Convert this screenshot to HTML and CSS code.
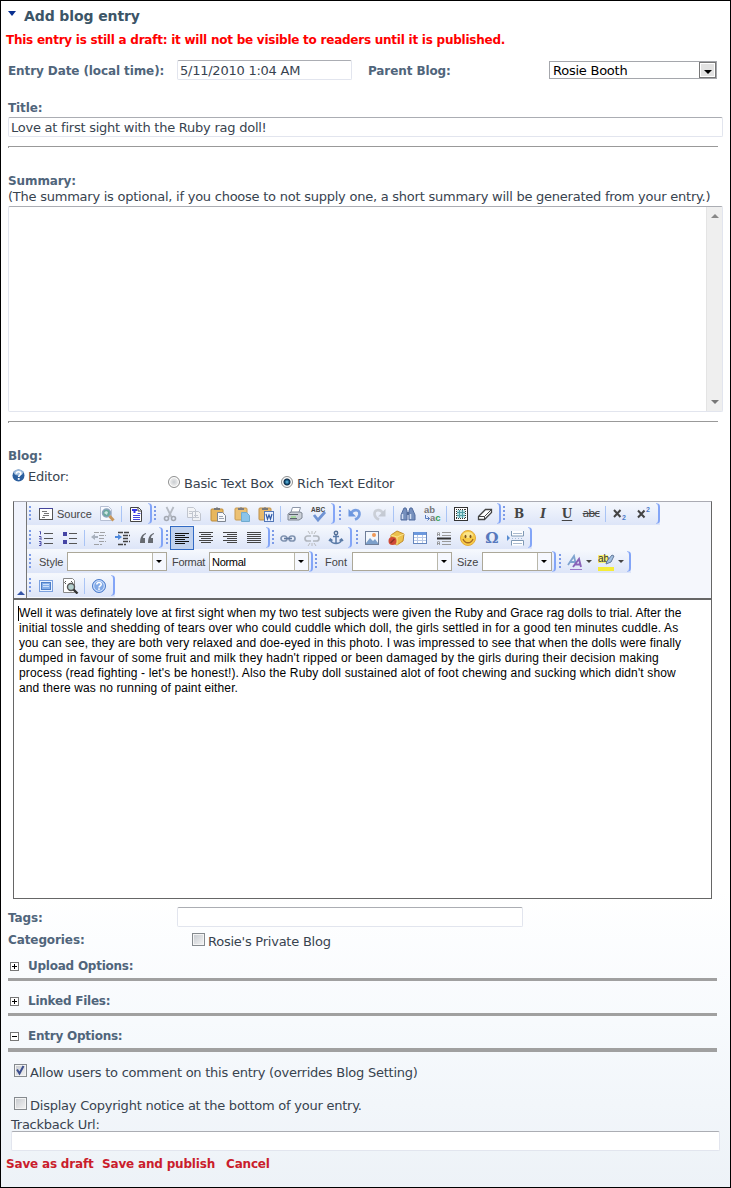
FILE: index.html
```html
<!DOCTYPE html>
<html lang="en">
<head>
<meta charset="utf-8">
<title>Add blog entry</title>
<link rel="stylesheet" href="styles.css">
</head>
<body>
<main class="page">
  <h1 class="heading"><span class="caret"></span><span class="heading-text">Add blog entry</span></h1>
  <p class="warning">This entry is still a draft: it will not be visible to readers until it is published.</p>
  <div class="row date-row">
    <span class="label date-label">Entry Date (local time):</span>
    <div class="field date-field">5/11/2010 1:04 AM</div>
    <span class="label parent-label">Parent Blog:</span>
    <div class="select"><span>Rosie Booth</span><i class="select-btn"></i></div>
  </div>
  <div class="label title-label">Title:</div>
  <div class="field title-field">Love at first sight with the Ruby rag doll!</div>
  <div class="rule"></div>
  <div class="label block-label">Summary:</div>
  <div class="note"><span>(The summary is optional, if you choose to not supply one, a short summary will be generated from your entry.)</span></div>
  <div class="textarea"><div class="scroll"><i class="up"></i><i class="down"></i></div></div>
  <div class="rule"></div>
  <div class="label block-label">Blog:</div>
  <div class="editor-row">
    <svg class="help" width="13" height="13" viewBox="0 0 13 13"><circle cx="6.5" cy="6.5" r="6" fill="#2c5f9e"/><ellipse cx="6.5" cy="3.6" rx="4.6" ry="3" fill="#9dbbdc"/><path d="M4.3 4.7C4.4 2 9 2.2 8.8 4.7 8.7 6.2 6.8 6.2 6.7 8" fill="none" stroke="#fff" stroke-width="1.7"/><rect x="5.8" y="9" width="1.8" height="1.8" fill="#fff"/></svg>
    <span class="editor-label">Editor:</span>
    <i class="radio"></i><span class="radio-text basic">Basic Text Box</span>
    <i class="radio on"></i><span class="radio-text rich">Rich Text Editor</span>
  </div>

  <div class="editor">
    <div class="toolbox">
      <div class="collapse"><i></i></div>
      <div class="bars">
        <div class="bar">
          <div class="group">
            <span class="btn source"><svg width="16" height="16" viewBox="0 0 16 16"><rect x="1.5" y="2.5" width="13" height="11" fill="#fff" stroke="#555"/><path d="M1 2.5h14" stroke="#44449c"/><path d="M4 5.5h5M6 7.500h5M5 9.500h6M4 11.500h3" stroke="#777"/></svg><span>Source</span></span>
            <span class="btn"><svg width="18" height="16" viewBox="0 0 18 16"><path d="M2.500.5h8l3 3v11h-11z" fill="#f8faff" stroke="#b6bfd3"/><circle cx="8.500" cy="7" r="4" fill="#69a99b" stroke="#8ca4bd" stroke-width="1.500"/><path d="M6 7l2-2 2 1-1 3z" fill="#cfe6e4"/><path d="M11.500 10l4 4.500" stroke="#c9975c" stroke-width="3"/></svg></span>
            <i class="sep"></i>
            <span class="btn"><svg width="16" height="16" viewBox="0 0 16 16"><path d="M2.500 1.500h8l3 3v11h-11z" fill="#fff" stroke="#444"/><path d="M10 1v4h4" fill="none" stroke="#444"/><path d="M4 4h5M6.500 4v3" stroke="#3434e8" stroke-width="2"/><path d="M9.500 7.500h3M5 9.500h7M5 11.500h7M5 13.500h7" stroke="#4646e0"/></svg></span>
          </div>
          <div class="group">
            <span class="btn"><svg class="dim" width="16" height="16" viewBox="0 0 16 16"><path d="M4.500 1l5 10M11.500 1l-5 10" stroke="#a3a8b0" stroke-width="1.800"/><circle cx="4.500" cy="12.500" r="2" fill="none" stroke="#8d929a" stroke-width="1.600"/><circle cx="11.500" cy="12.500" r="2" fill="none" stroke="#8d929a" stroke-width="1.600"/></svg></span>
            <span class="btn"><svg class="dim" width="16" height="16" viewBox="0 0 16 16"><path d="M1.500 1.500h6l2 2v8h-8zM6.500 5.500h6l2 2v7h-8z" fill="#f6f6f6" stroke="#b4b8c0"/><path d="M3 5.500h3M3 7.500h3M8 9.500h4M8 11.500h5" stroke="#b8bbc2"/></svg></span>
            <span class="btn"><svg width="16" height="16" viewBox="0 0 16 16"><rect x="1" y="3" width="12" height="12" rx="1" fill="#e7b65c" stroke="#bc8b3b"/><path d="M4 4V2h2l1-1 1 1h2v2z" fill="#777"/><path d="M7.500 6.500h5l3 3v6h-8z" fill="#f7f9fc" stroke="#7e8590"/><path d="M9 10.500h4M9 12.500h5" stroke="#9ca3b3"/></svg></span>
            <span class="btn"><svg width="16" height="16" viewBox="0 0 16 16"><rect x="1" y="2" width="12" height="12" rx="1" fill="#ecc173" stroke="#c79a51"/><path d="M4 4V2h2l1-1 1 1h2v2z" fill="#7c7c80"/><path d="M7.500 6.500h5l3 3v6h-8z" fill="#8bc4e9" stroke="#70abcf"/></svg></span>
            <span class="btn"><svg width="16" height="16" viewBox="0 0 16 16"><rect x="1" y="2" width="12" height="12" rx="1" fill="#e7b96b" stroke="#bd8f48"/><path d="M4 4V2h2l1-1 1 1h2v2z" fill="#777"/><rect x="6.500" y="5.500" width="9" height="10" fill="#eaf2ff" stroke="#5477b7"/><path d="M8 8l1.500 5 1.500-4 1.500 4 1.500-5" fill="none" stroke="#315aa6" stroke-width="1.200"/></svg></span>
            <i class="sep"></i>
            <span class="btn"><svg width="16" height="16" viewBox="0 0 16 16"><path d="M5.500 1.500h8l-2 6h-8z" fill="#fff" stroke="#8c96a8"/><path d="M1 8l3-2h9l2 1v5l-3 2H1z" fill="#cbd0d8" stroke="#7e8692"/><path d="M2 8.500h9M3 12.500h7" stroke="#5b636e"/><path d="M4 11h5" stroke="#7fdb67"/></svg></span>
            <span class="btn"><svg width="18" height="16" viewBox="0 0 18 16"><text class="abc" x="1" y="6">ABC</text><path d="M4 9l4 5 7-8" fill="none" stroke="#6f93d3" stroke-width="2.800"/></svg></span>
          </div>
          <div class="group shift2">
            <span class="btn"><svg width="16" height="16" viewBox="0 0 16 16"><path d="M4 7C7 3 13 3 12.500 8.500c-.3 2-2 4-4.500 5" fill="none" stroke="#779ee1" stroke-width="2.600"/><path d="M1.500 3v7.500H9z" fill="#6b96df"/></svg></span>
            <span class="btn"><svg class="dim" width="16" height="16" viewBox="0 0 16 16"><path d="M12 7C9 3 3 3 3.500 8.500c.3 2 2 4 4.500 5" fill="none" stroke="#c1c5cc" stroke-width="2.600"/><path d="M14.500 3v7.500H7z" fill="#b9bec6"/></svg></span>
            <i class="sep"></i>
            <span class="btn"><svg width="16" height="16" viewBox="0 0 16 16"><path d="M4 2h2l1 3 0 9H1V9zM12 2h-2L9 5v9h6V9z" fill="#7690bd" stroke="#526c9f"/><path d="M7 6h2v3H7z" fill="#536b97"/><path d="M2.500 8v5M10.500 8v5" stroke="#d2def2" stroke-width="1.500"/></svg></span>
            <span class="btn"><svg width="18" height="18" viewBox="0 0 18 18"><text class="repl" x="1" y="8">ab</text><text class="repl" x="7" y="16">a<tspan fill="#38a157">c</tspan></text><path d="M2.500 10v3.500h4M4.500 11.500l2 2-2 2" fill="none" stroke="#5579bd"/></svg></span>
            <i class="sep"></i>
            <span class="btn"><svg width="16" height="16" viewBox="0 0 16 16"><rect x="1.500" y="1.500" width="13" height="13" fill="#fff" stroke="#333"/><rect x="4" y="4" width="8" height="8" fill="#b9e2e5"/><path d="M4 6.500h8M4 9.500h8M6.500 4v8M9.500 4v8" stroke="#519da4"/><path d="M3 3.500h10M3 12.500h10M3.500 3v10M12.500 3v10" stroke="#333" stroke-dasharray="1 1"/></svg></span>
            <span class="btn"><svg width="16" height="16" viewBox="0 0 16 16"><path d="M1.500 10.500l7-7h6v3l-7 7h-6z" fill="#fff" stroke="#444" stroke-width="1.300"/><path d="M1.500 10.500h6l7-7M7.500 10.500v3" fill="none" stroke="#444"/></svg></span>
          </div>
          <div class="group">
            <span class="btn fmt b">B</span><span class="btn fmt i">I</span><span class="btn fmt u">U</span><span class="btn fmt s">abc</span>
            <i class="sep"></i>
            <span class="btn"><svg width="16" height="16" viewBox="0 0 16 16"><path d="M2 4l6.500 7M8.500 4L2 11" stroke="#444" stroke-width="2"/><text class="script" x="10" y="14">2</text></svg></span>
            <span class="btn"><svg width="16" height="16" viewBox="0 0 16 16"><path d="M2 4.500l6.500 7M8.500 4.500L2 11.500" stroke="#444" stroke-width="2"/><text class="script" x="10" y="6">2</text></svg></span>
          </div>
        </div>

        <div class="bar">
          <div class="group">
            <span class="btn"><svg width="16" height="16" viewBox="0 0 16 16"><path d="M6 3.500h9M6 8.500h9M6 13.500h9" stroke="#555"/><path d="M1.500 1.500h1v3M1 6.500h2v1l-1.500 1.500H4M1 11.500h2v4H1M1.500 13.500H3" fill="none" stroke="#4b4ba8"/></svg></span>
            <span class="btn"><svg width="16" height="16" viewBox="0 0 16 16"><path d="M1 2h4v4H1zM1 10h4v4H1z" fill="#4545a5"/><path d="M7 3.500h8M7 8.500h8M7 13.500h8" stroke="#555"/></svg></span>
            <i class="sep"></i>
            <span class="btn"><svg class="dim" width="16" height="16" viewBox="0 0 16 16"><path d="M3 2.500h12M8 5.500h7M8 8.500h5M8 11.500h7M3 14.500h8" stroke="#888" stroke-dasharray="5 1"/><path d="M0 7l4-3v2h3v2H4v2z" fill="#929ca9"/></svg></span>
            <span class="btn"><svg width="16" height="16" viewBox="0 0 16 16"><path d="M3 2.500h12M8 5.500h7M8 8.500h5M8 11.500h7M3 14.500h8" stroke="#444" stroke-width="1.500" stroke-dasharray="5 1"/><path d="M7 7L3 4v2H0v2h3v2z" fill="#4f89dc"/></svg></span>
            <span class="btn"><svg width="16" height="16" viewBox="0 0 16 16"><path d="M7 3C3 4 1 7 1 13h5V8H4c0-2 1-3 3-4zM15 3c-4 1-6 4-6 10h5V8h-2c0-2 1-3 3-4z" fill="#666a70"/></svg></span>
          </div>
          <div class="group shift1">
            <span class="btn active"><svg width="16" height="16" viewBox="0 0 16 16"><path d="M1 3.500h14M1 5.500h10M1 7.500h14M1 9.500h10M1 11.500h14M1 13.500h10" stroke="#111"/></svg></span>
            <span class="btn"><svg width="16" height="16" viewBox="0 0 16 16"><path d="M1 2.500h14M3 4.500h10M1 6.500h14M3 8.500h10M1 10.500h14M3 12.500h10" stroke="#444"/></svg></span>
            <span class="btn"><svg width="16" height="16" viewBox="0 0 16 16"><path d="M1 2.500h14M5 4.500h10M1 6.500h14M5 8.500h10M1 10.500h14M5 12.500h10" stroke="#444"/></svg></span>
            <span class="btn"><svg width="16" height="16" viewBox="0 0 16 16"><path d="M1 2.500h14M1 4.500h14M1 6.500h14M1 8.500h14M1 10.500h14M1 12.500h14" stroke="#444"/></svg></span>
          </div>
          <div class="group">
            <span class="btn"><svg width="16" height="16" viewBox="0 0 16 16"><rect x="1" y="6" width="6" height="5" rx="2.500" fill="none" stroke="#8194b1" stroke-width="1.700"/><rect x="9" y="6" width="6" height="5" rx="2.500" fill="none" stroke="#8194b1" stroke-width="1.700"/><path d="M4 8.500h8" stroke="#62799d" stroke-width="1.500"/></svg></span>
            <span class="btn"><svg class="dim" width="16" height="16" viewBox="0 0 16 16"><path d="M7 6H3.500a2.500 2.500 0 000 5H7M9 6h3.500a2.500 2.500 0 010 5H9" fill="none" stroke="#a0a5ac" stroke-width="1.700"/><path d="M8 1v3M8 13v3M4 1l2 3M12 1l-2 3M4 16l2-3M12 16l-2-3" stroke="#aaa"/></svg></span>
            <span class="btn"><svg width="16" height="16" viewBox="0 0 16 16"><circle cx="8" cy="3" r="1.700" fill="none" stroke="#536f96" stroke-width="1.400"/><path d="M8 5v9M5 6.500h6M2.500 9v1.500c1 2 3 3 5.500 3s4.500-1 5.500-3V9M1 11l1.500-2 2 1.500M15 11l-1.500-2-2 1.500" fill="none" stroke="#597aa7" stroke-width="1.500"/></svg></span>
          </div>
          <div class="group shift2">
            <span class="btn"><svg width="16" height="16" viewBox="0 0 16 16"><rect x="1.500" y="1.500" width="13" height="13" fill="#f3f7fc" stroke="#6f7e98"/><path d="M2 13l4-5 3 3 2-2 3 4v1H2z" fill="#7c9fca"/><circle cx="10" cy="5" r="2" fill="#f09958"/></svg></span>
            <span class="btn"><svg width="17" height="16" viewBox="0 0 17 16"><path d="M3 5l6-4 7 3-1 7-6 4-6-3z" fill="#ecc24d" stroke="#c28d2e"/><path d="M3 5l6 2 7-3M9 7v8" stroke="#fbe28b" fill="none"/><circle cx="4.500" cy="11" r="4" fill="#cf4a37"/><path d="M2.500 13l4-4" stroke="#8c3025" stroke-width="1.500"/></svg></span>
            <span class="btn"><svg width="16" height="16" viewBox="0 0 16 16"><rect x="1.500" y="2.500" width="13" height="11" fill="#fff" stroke="#6485bd"/><path d="M2 3.500h12" stroke="#6c98dd" stroke-width="3"/><path d="M2 7.500h12M2 10.500h12M5.500 5v8M10.500 5v8" stroke="#b9c9e7"/></svg></span>
            <span class="btn"><svg width="16" height="16" viewBox="0 0 16 16"><path d="M6 2.500h9M6 5.500h9M6 11.500h9M6 14.500h9" stroke="#999"/><path d="M1 8.500h14" stroke="#333" stroke-width="2"/><path d="M1.500 6V3l1-1 1 1v3M1.500 4.500h2M1.500 15v-3l1-1 1 1v3M1.500 13.500h2" fill="none" stroke="#888" stroke-width=".8"/></svg></span>
            <span class="btn"><svg width="16" height="16" viewBox="0 0 16 16"><circle cx="8" cy="8" r="7.500" fill="#f7cc48" stroke="#e2a93a"/><ellipse cx="8" cy="5" rx="5" ry="3" fill="#fbe58b"/><ellipse cx="5.500" cy="6.500" rx="1" ry="1.700" fill="#80551d"/><ellipse cx="10.500" cy="6.500" rx="1" ry="1.700" fill="#80551d"/><path d="M3 9c2 5 8 5 10 0" fill="none" stroke="#a66823" stroke-width="1.300"/></svg></span>
            <span class="btn omega">Ω</span>
            <span class="btn"><svg width="18" height="16" viewBox="0 0 18 16"><path d="M4.500 1v5h12V1M4.500 15.500v-5h12v5" fill="#fff" stroke="#7e98b4"/><path d="M6 3.500h9M6 13.500h9" stroke="#aabacf"/><path d="M0 5l3 3-3 3z" fill="#578bd0"/><path d="M5 8.500h12" stroke="#a4bbd8" stroke-dasharray="1 2"/></svg></span>
          </div>
        </div>

        <div class="bar">
          <div class="group">
            <span class="cap style-cap">Style</span><span class="combo"><i></i></span>
            <span class="cap format-cap">Format</span><span class="combo">Normal<i></i></span>
          </div>
          <div class="group">
            <span class="cap font-cap">Font</span><span class="combo"><i></i></span>
            <span class="cap size-cap">Size</span><span class="combo small"><i></i></span>
          </div>
          <div class="group shift1">
            <span class="btn drop"><svg width="16" height="16" viewBox="0 0 16 16"><path d="M1 11L7 2l2 9M3 8h5" fill="none" stroke="#7fa4cf" stroke-width="1.800"/><path d="M6 13l6-8 2 8M8 10.500h5" fill="none" stroke="#8962b8" stroke-width="1.900"/><path d="M3 15.500h12" stroke="#9b75c9"/></svg><i></i></span>
            <span class="btn drop"><svg width="17" height="18" viewBox="0 0 17 18"><path d="M0 2h10v8H0z" fill="#f6f178"/><text class="mark" x="0" y="9">ab</text><path d="M8 11l1-3 5-6 2 1-3 6z" fill="#a4c1e1" stroke="#62799a"/><path d="M0 14h16v4H0z" fill="#f5ec38"/></svg><i></i></span>
          </div>
        </div>

        <div class="bar">
          <div class="group">
            <span class="btn"><svg width="16" height="16" viewBox="0 0 16 16"><rect x="1.500" y="2.500" width="13" height="11" fill="#eaf2ff" stroke="#7ca1df"/><rect x="3.500" y="4.500" width="9" height="7" fill="#86afe9" stroke="#4f7fc8"/><path d="M5 6.500h6M5 8.500h6" stroke="#cfe0fa"/></svg></span>
            <span class="btn"><svg width="17" height="16" viewBox="0 0 17 16"><path d="M1.500.5h9l2 2v12h-11z" fill="#fff" stroke="#888"/><path d="M4 3L2.500 4.500 4 6M9 3l1.500 1.500L9 6" fill="none" stroke="#555"/><circle cx="9" cy="9" r="3.500" fill="#b4d0ce" stroke="#555" stroke-width="1.400"/><path d="M11.500 11.500l4 4" stroke="#333" stroke-width="2.400"/></svg></span>
            <i class="sep"></i>
            <span class="btn"><svg width="16" height="16" viewBox="0 0 16 16"><circle cx="8" cy="8" r="6.500" fill="#81a9e7" stroke="#4d7dcb"/><circle cx="8" cy="8" r="5.300" fill="none" stroke="#d7e6ff"/><path d="M5.800 6.500C6 3.500 10.500 4 10.200 6.500 10 8 8.200 7.800 8 9.500" fill="none" stroke="#fff" stroke-width="1.600"/><rect x="7.200" y="10.300" width="1.600" height="1.600" fill="#fff"/></svg></span>
          </div>
        </div>
      </div>
    </div>
    <div class="content">
      <div class="line l1">Well it was definately love at first sight when my two test subjects were given the Ruby and Grace rag dolls to trial. After the</div>
      <div class="line l2">initial tossle and shedding of tears over who could cuddle which doll, the girls settled in for a good ten minutes cuddle. As</div>
      <div class="line l3">you can see, they are both very relaxed and doe-eyed in this photo. I was impressed to see that when the dolls were finally</div>
      <div class="line l4">dumped in favour of some fruit and milk they hadn't ripped or been damaged by the girls during their decision making</div>
      <div class="line l5">process (read fighting - let's be honest!). Also the Ruby doll sustained alot of foot chewing and sucking which didn't show</div>
      <div class="line l6">and there was no running of paint either.</div>
    </div>
  </div>

  <div class="row tags-row"><span class="label tags-label">Tags:</span><div class="field tags-field"></div></div>
  <div class="row cat-row"><span class="label cat-label">Categories:</span><i class="check"></i><span class="check-text">Rosie's Private Blog</span></div>
  <div class="section first"><i class="toggle plus"></i><span>Upload Options:</span></div>
  <div class="section"><i class="toggle plus"></i><span>Linked Files:</span></div>
  <div class="section last"><i class="toggle"></i><span>Entry Options:</span></div>
  <div class="option"><i class="check"><svg width="11" height="11" viewBox="0 0 11 11"><path d="M2 4.500l2.500 4L8.500 1" fill="none" stroke="#3c4f8f" stroke-width="2"/></svg></i><span class="check-text">Allow users to comment on this entry (overrides Blog Setting)</span></div>
  <div class="option second"><i class="check"></i><span class="check-text">Display Copyright notice at the bottom of your entry.</span></div>
  <div class="trackback">Trackback Url:</div>
  <div class="field track-field"></div>
  <div class="actions"><a>Save as draft</a><a>Save and publish</a><a>Cancel</a></div>
</main>
</body>
</html>
```
FILE: styles.css
```css
*, *::before, *::after { box-sizing: border-box; }
body { margin: 0; }
.page {
  width: 731px; height: 1188px; border: 1px solid #000; overflow: hidden;
  font: 13px/18px "DejaVu Sans", Verdana, sans-serif; letter-spacing: -.24px; color: #38434f; white-space: nowrap;
  background: linear-gradient(#fff 0, #fff 890px, #f7fafd 1020px, #edf2f7 1186px);
}
.page i { font-style: normal; display: block; flex: none; }
svg { display: block; flex: none; letter-spacing: 0; }
.heading { margin: 0; height: 27px; display: flex; align-items: center; padding: 2px 0 0 7px; font-size: 14px; letter-spacing: -.1px; color: #3c5567; }
.caret { border: 4px solid transparent; border-top: 5px solid #0a3090; border-bottom: 0; margin: -4px 8px 0 0; }
.warning { margin: 0; height: 24px; line-height: 25px; padding-left: 5px; font-weight: bold; font-size: 12px; color: #f00; }
.row { display: flex; align-items: center; }
.label { font-weight: bold; font-size: 12px; letter-spacing: -.1px; color: #50657b; }
.field { height: 20px; border: 1px solid #e2e5ee; border-top-color: #abadb3; border-radius: 2px; background: #fff; padding-left: 2px; line-height: 19px; }
.date-row { height: 36px; padding-left: 7px; }
.date-row .label { padding-top: 2px; }
.date-label { width: 169px; }
.date-field { width: 175px; margin-right: 16px; }
.parent-label { width: 181px; }
.select { width: 168px; height: 18px; border: 1px solid #a5a7ac; background: #fff; display: flex; justify-content: space-between; align-items: center; padding-left: 3px; color: #000; }
.select span { padding-top: 2px; }
.select-btn { width: 17px; height: 16px; border: 1px solid #777; background: #e2e2e2; box-shadow: inset 0 0 0 1px #fff; padding: 7px 0 0 4px; }
.select-btn::after { content: ""; display: block; width: 0; border: 4px solid transparent; border-top-color: #000; border-bottom: 0; margin-left: 0; }
.title-label { margin: 9px 0 0 7px; height: 20px; line-height: 22px; }
.title-field { margin-left: 7px; width: 715px; }
.rule { margin: 9px 0 23px 7px; width: 710px; height: 2px; border-top: 1px solid #999; border-left: 1px solid #999; }
.block-label { margin-left: 7px; height: 18px; line-height: 20px; }
.note { margin-left: 7px; height: 17px; line-height: 15px; }
.textarea { margin-left: 7px; width: 715px; height: 206px; border: 1px solid #e2e5ee; border-top-color: #abadb3; border-radius: 2px; background: #fff; display: flex; justify-content: flex-end; }
.scroll { width: 16px; background: #efefef; border-left: 1px solid #e4e4e4; display: flex; flex-direction: column; justify-content: space-between; align-items: center; padding: 7px 0; }
.up, .down { border: 4px solid transparent; border-top: 0; border-bottom-color: #888; }
.down { border-top: 4px solid #777; border-bottom: 0; }
.editor-row { height: 37px; display: flex; padding-left: 11px; }
.help { margin-top: 5px; }
.editor-label { margin: 4px 0 0 3px; width: 140px; }
.radio { width: 12px; height: 12px; border: 1px solid #8e8f8f; border-radius: 50%; background: radial-gradient(#c8ccd0, #eee 60%); box-shadow: inset 0 0 0 1px #fff; margin-top: 12px; }
.radio.on { background: radial-gradient(#6fc8f0 0, #14567e 2px, #0c2b48 3px, #eee 4px); }
.radio-text { margin: 11px 0 0 4px; width: 97px; }
.editor { margin-left: 12px; width: 699px; height: 398px; border: 1px solid #666; background: #fff; border-top-color: #aaabb3; }
.toolbox { display: flex; height: 98px; background: #f5f7fc; border-bottom: 2px solid #666; letter-spacing: 0; }
.collapse { width: 13px; border-right: 1px solid #777; display: flex; align-items: flex-end; padding: 0 0 3px 3px; background: #f0f3fc; }
.collapse i { border: 4px solid transparent; border-top: 0; border-bottom-color: #3656a8; }
.bars { display: flex; flex-direction: column; gap: 1px; }
.bar { display: flex; height: 23px; }
.group { display: flex; height: 23px; align-items: center; background: linear-gradient(#f5f8fd, #dde5f8); }
.group::before { content: ""; width: 2px; height: 15px; margin: 0 2px; background: repeating-linear-gradient(#7c9be8 0 2px, transparent 2px 4px); }
.group:first-child::before { margin-right: 3px; }
.group::after { content: ""; width: 4px; height: 21px; border-right: 2px solid #83a5f7; border-top: 1px solid #a9c0f8; border-bottom: 1px solid #a9c0f8; border-radius: 0 4px 4px 0; }
.shift1 { padding-left: 1px; }
.shift2 { padding-left: 2px; }
.btn { width: 24px; height: 24px; display: flex; align-items: center; justify-content: center; color: #444; }
.active { background: #c1d2ee; border: 1px solid #316ac5; }
.source { width: 61px; justify-content: flex-start; padding-left: 4px; gap: 3px; font: 11px/16px "Liberation Sans", Arial, sans-serif; }
.sep { width: 1px; height: 16px; background: #a9c4f5; margin: 0 2px; }
.dim { opacity: .75; }
.abc { font: bold 6.500px "Liberation Sans", sans-serif; fill: #444; }
.repl { font: bold 9.500px "Liberation Sans", sans-serif; fill: #777; }
.script { font: bold 7px "Liberation Sans", sans-serif; fill: #4d7bc8; }
.mark { font: 10px "Liberation Sans", sans-serif; fill: #333; }
.fmt { font: bold 12px/20px "DejaVu Serif", serif; }
.i { font-style: italic; }
.u { text-decoration: underline; text-underline-offset: 2px; }
.s { font: 11px/20px "DejaVu Sans", sans-serif; letter-spacing: -1px; text-decoration: line-through; }
.omega { font: bold 15px/20px "DejaVu Serif", serif; color: #5779bd; }
.cap { font: 11px/22px "Liberation Sans", Arial, sans-serif; color: #444; }
.style-cap { width: 33px; padding-left: 5px; }
.format-cap { width: 42px; padding-left: 5px; letter-spacing: -.3px; }
.font-cap { width: 33px; padding-left: 6px; }
.size-cap { width: 30px; padding-left: 5px; }
.combo { width: 100px; height: 19px; border: 1px solid #aca899; background: #fff; display: flex; align-items: center; padding: 2px 0 0 2px; font: 11px/17px "Liberation Sans", Arial, sans-serif; letter-spacing: -.3px; color: #000; }
.small { width: 70px; }
.combo i { margin: -2px 0 0 auto; width: 14px; height: 17px; border-left: 1px solid #b9b7aa; padding: 7px 0 0 3px; background: #f6f8fe; }
.combo i::after, .drop i { content: ""; display: block; width: 0; border: 3px solid transparent; border-top-color: #000; border-bottom: 0; }
.drop { width: 32px; gap: 3px; }
.drop i { border-top-color: #444; }
.content { padding: 6px 0 0 5px; font: 12px/15px "Liberation Sans", Arial, sans-serif; color: #000; }
.line { height: 15px; }
.l1 { border-left: 1px solid #000; margin-left: -1px; letter-spacing: .07px; }
.l2 { letter-spacing: .146px; }
.l3 { letter-spacing: .09px; }
.l4 { letter-spacing: .172px; }
.l5 { letter-spacing: .146px; }
.l6 { letter-spacing: .12px; }
.tags-row { margin: 8px 0 0 7px; height: 20px; }
.tags-label { width: 169px; padding-top: 2px; }
.tags-field { width: 346px; }
.cat-row { height: 26px; padding-left: 7px; }
.cat-label { width: 184px; }
.check { width: 13px; height: 13px; border: 1px solid #858a8e; background: linear-gradient(135deg, #c5c9ce, #f4f4f4); box-shadow: inset 0 0 0 1px #f4f4f4; margin-top: -2px; }
.check-text { margin: 3px 0 0 3px; }
.section { height: 35px; padding: 8px 0 0 2px; margin-left: 7px; width: 709px; border-bottom: 3px solid #a0a0a0; line-height: 25px; font-weight: bold; font-size: 12px; color: #50657b; display: flex; align-items: center; gap: 9px; }
.first { height: 28px; padding-top: 1px; }
.last { height: 36px; border-bottom-width: 4px; }
.toggle { width: 9px; height: 9px; border: 1px solid #777; background: linear-gradient(#000, #000) center / 5px 1px no-repeat #fff; }
.plus { background: linear-gradient(#000, #000) center / 5px 1px no-repeat, linear-gradient(#000, #000) center / 1px 5px no-repeat, #fff; }
.option { margin: 7px 0 0 13px; height: 24px; display: flex; align-items: center; }
.second { margin-top: 9px; }
.trackback { height: 15px; line-height: 17px; padding-left: 10px; }
.track-field { margin-left: 10px; width: 709px; }
.actions { height: 25px; line-height: 27px; padding-left: 5px; display: flex; font-weight: bold; font-size: 12px; letter-spacing: -.18px; color: #ca1d2c; }
.actions a { width: 96px; }
.actions a + a { width: 124px; }
```
